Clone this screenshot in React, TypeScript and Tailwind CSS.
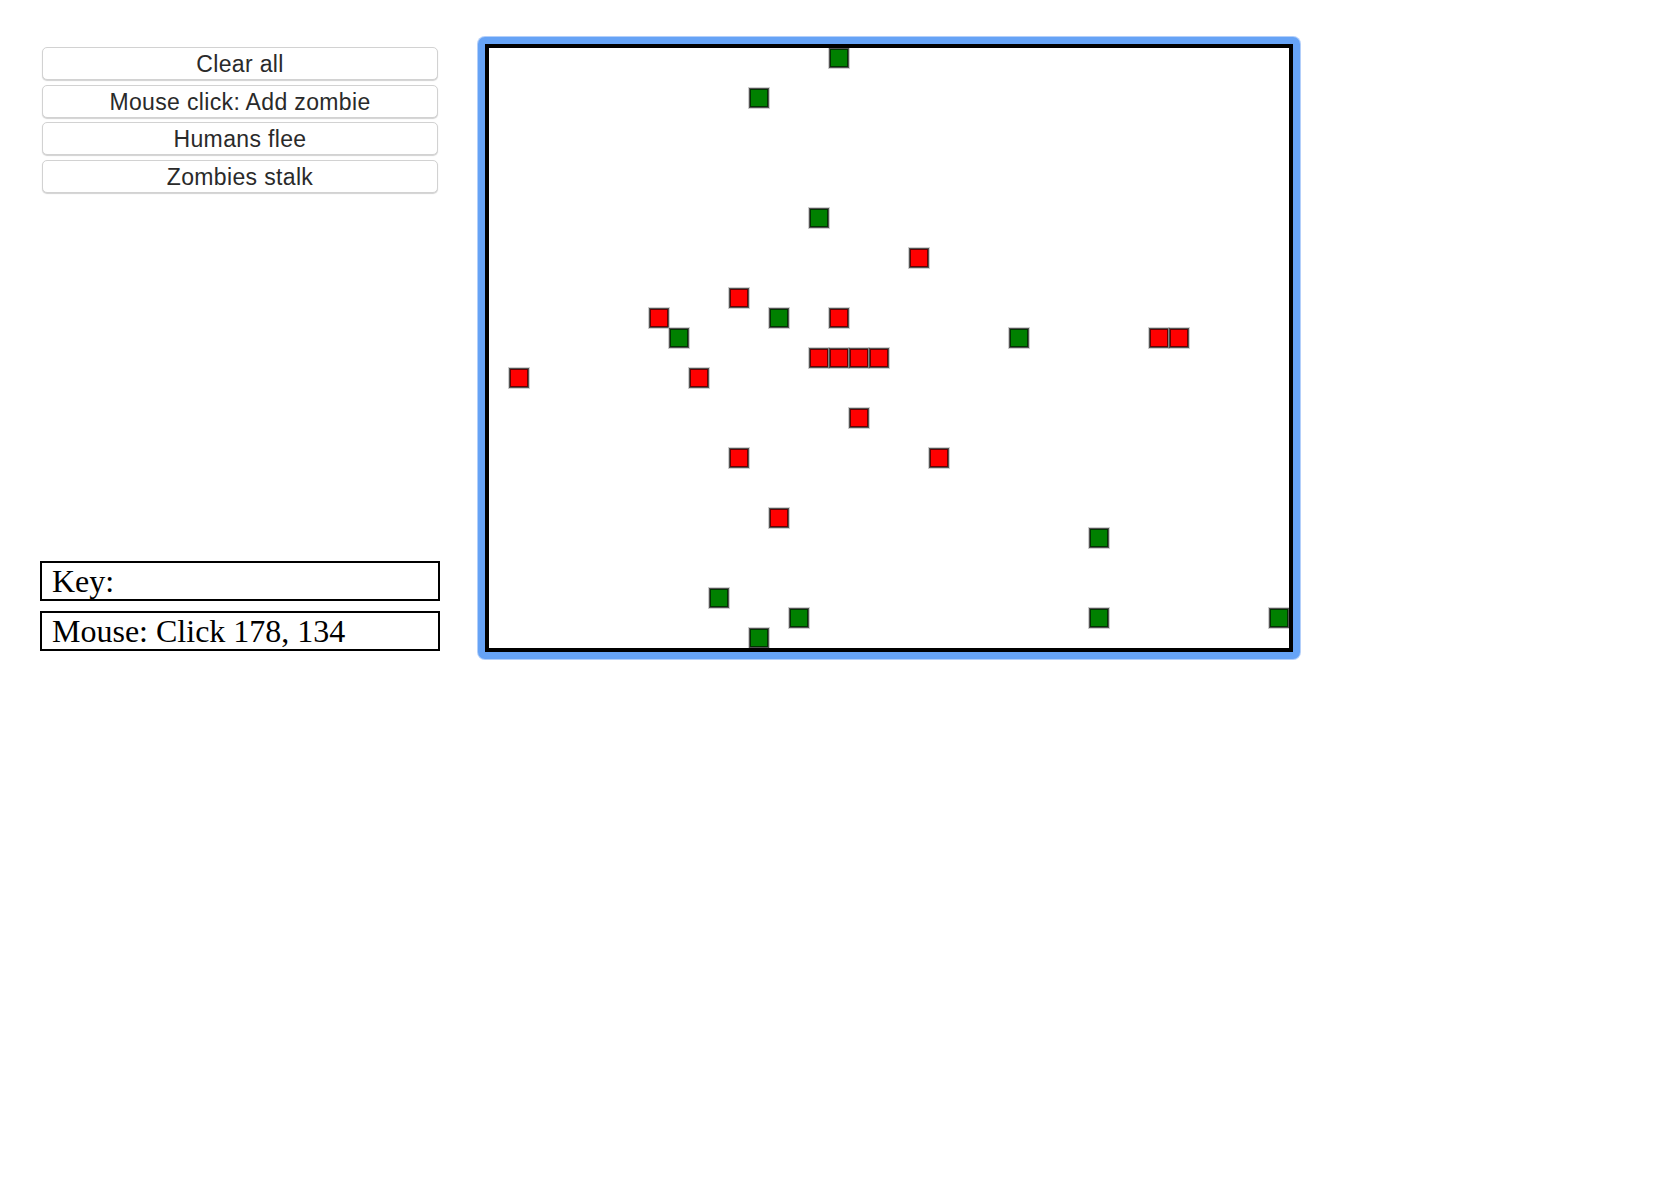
import React from "react";

type Cell = [number, number];

const zombies: Cell[] = [
  [17, 0], [13, 2], [16, 8], [14, 13], [9, 14], [26, 14],
  [30, 24], [11, 27], [15, 28], [30, 28], [39, 28], [13, 29],
];

const humans: Cell[] = [
  [21, 10], [12, 12], [8, 13], [17, 13],
  [16, 15], [17, 15], [18, 15], [19, 15],
  [1, 16], [10, 16], [33, 14], [34, 14],
  [18, 18], [12, 20], [22, 20], [14, 23],
];

const Square = ({ c, r, fill }: { c: number; r: number; fill: string }) => {
  const x = c * 20;
  const y = r * 20;
  return (
    <g>
      <rect x={x - 1} y={y - 1} width={22} height={22} fill="#a8a8a8" opacity={0.55} />
      <rect
        x={x + 1}
        y={y + 1}
        width={18}
        height={18}
        fill={fill}
        stroke="rgba(0,0,0,0.6)"
        strokeWidth={2}
      />
    </g>
  );
};

const buttons = ["Clear all", "Mouse click: Add zombie", "Humans flee", "Zombies stalk"];

export default function App() {
  return (
    <div className="min-h-screen bg-white pt-[37px] pl-[40px] flex items-start gap-[38px]">
      <div className="w-[400px] h-[614px] pt-[10px] flex flex-col justify-between">
        <div className="flex flex-col gap-[4.7px] px-[2px]">
          {buttons.map((b) => (
            <button
              key={b}
              className="h-[33px] w-full pt-[2px] bg-white border border-[#d2d2d2] rounded-[5px] shadow-[0_1px_1px_rgba(0,0,0,0.18)] text-[#2a2a2a] text-[23px] tracking-[0.35px] leading-none font-['Liberation_Sans',Arial,sans-serif]"
            >
              {b}
            </button>
          ))}
        </div>
        <div className="flex flex-col gap-[10px] font-['Liberation_Serif','Times_New_Roman',serif] text-[32px] text-black">
          <div className="h-[40px] border-2 border-black pl-[10px] leading-[36px]">Key:</div>
          <div className="h-[40px] border-2 border-black pl-[10px] leading-[36px]">Mouse: Click 178, 134</div>
        </div>
      </div>
      <div className="p-[7px] bg-[#66a3f6] rounded-[7px] shadow-[0_0_0_1px_#b3cffa]">
        <div className="w-[808px] h-[608px] border-4 border-black bg-white">
          <svg width={800} height={600} viewBox="0 0 800 600" className="block">
            {humans.map(([c, r], i) => (
              <Square key={`h${i}`} c={c} r={r} fill="#ff0000" />
            ))}
            {zombies.map(([c, r], i) => (
              <Square key={`z${i}`} c={c} r={r} fill="#008000" />
            ))}
          </svg>
        </div>
      </div>
    </div>
  );
}
